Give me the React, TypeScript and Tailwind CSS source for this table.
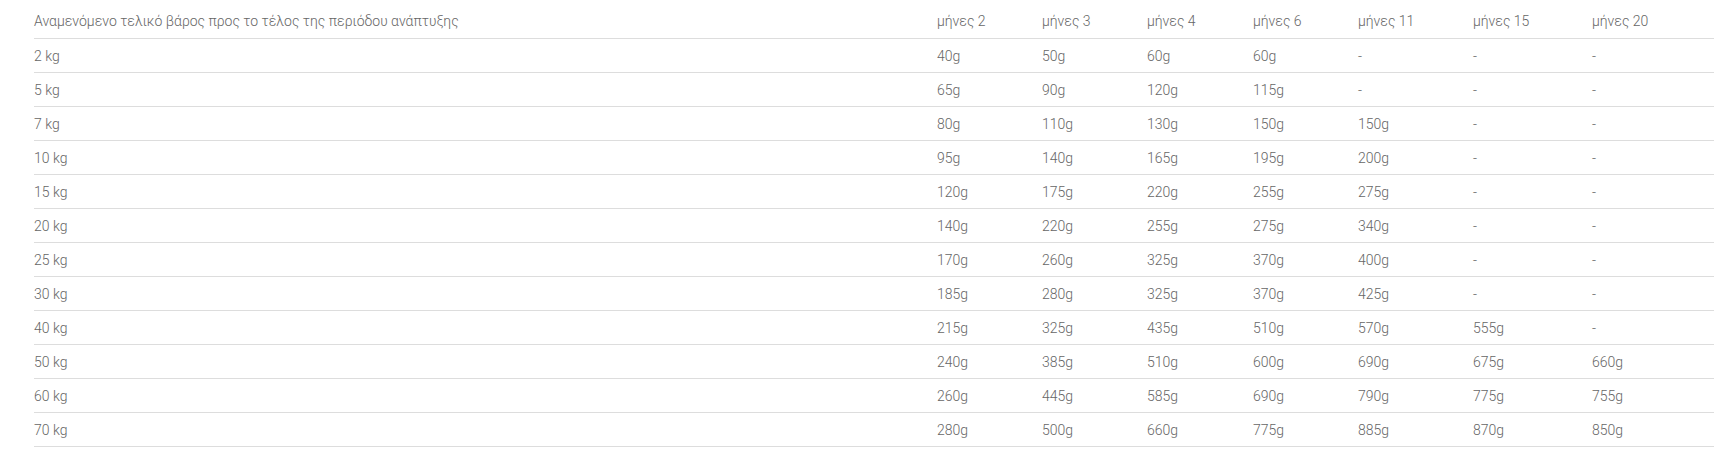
const months = ['μήνες 2', 'μήνες 3', 'μήνες 4', 'μήνες 6', 'μήνες 11', 'μήνες 15', 'μήνες 20'];

const rows: [string, string[]][] = [
  ['2 kg', ['40g', '50g', '60g', '60g', '-', '-', '-']],
  ['5 kg', ['65g', '90g', '120g', '115g', '-', '-', '-']],
  ['7 kg', ['80g', '110g', '130g', '150g', '150g', '-', '-']],
  ['10 kg', ['95g', '140g', '165g', '195g', '200g', '-', '-']],
  ['15 kg', ['120g', '175g', '220g', '255g', '275g', '-', '-']],
  ['20 kg', ['140g', '220g', '255g', '275g', '340g', '-', '-']],
  ['25 kg', ['170g', '260g', '325g', '370g', '400g', '-', '-']],
  ['30 kg', ['185g', '280g', '325g', '370g', '425g', '-', '-']],
  ['40 kg', ['215g', '325g', '435g', '510g', '570g', '555g', '-']],
  ['50 kg', ['240g', '385g', '510g', '600g', '690g', '675g', '660g']],
  ['60 kg', ['260g', '445g', '585g', '690g', '790g', '775g', '755g']],
  ['70 kg', ['280g', '500g', '660g', '775g', '885g', '870g', '850g']],
];

const cols = 'grid grid-cols-[903px_105px_105px_106px_105px_115px_119px_122px]';

export default function App() {
  return (
    <div className="h-[468px] w-[1720px] bg-white font-['Roboto',sans-serif] text-[14px] font-light text-[#666666]">
      <div className="ml-[34px] w-[1680px]">
        <div className={`${cols} h-[39px] items-center border-b border-[#dddddd] pt-[5px]`}>
          <div>Αναμενόμενο τελικό βάρος προς το τέλος της περιόδου ανάπτυξης</div>
          {months.map((m) => (
            <div key={m}>{m}</div>
          ))}
        </div>
        {rows.map(([kg, vals]) => (
          <div key={kg} className={`${cols} h-[34px] items-center border-b border-[#dddddd] pt-[2px]`}>
            <div>{kg}</div>
            {vals.map((v, i) => (
              <div key={i}>{v}</div>
            ))}
          </div>
        ))}
      </div>
    </div>
  );
}
